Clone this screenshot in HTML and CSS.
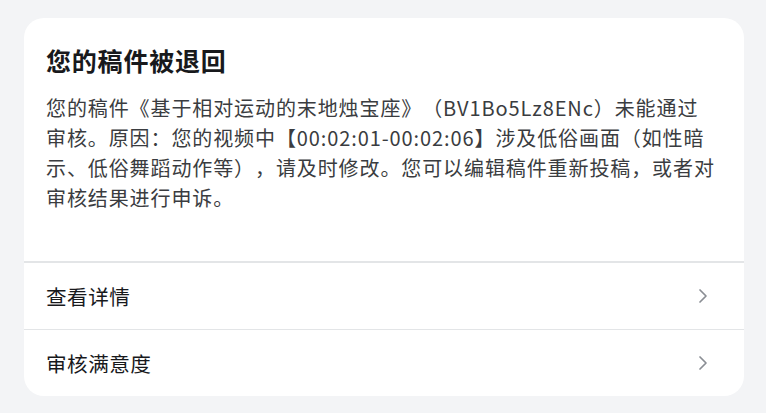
FILE: index.html
```html
<!DOCTYPE html>
<html lang="zh-CN">
<head>
<meta charset="utf-8">
<link rel="stylesheet" href="styles.css">
</head>
<body>
<div class="card">
  <div class="content">
    <h1 class="title">您的稿件被退回</h1>
    <p class="desc">您的稿件《基于相对运动的末地烛宝座》（BV1Bo5Lz8ENc）未能通过<br>审核。原因：您的视频中【00:02:01-00:02:06】涉及低俗画面（如性暗<br>示、低俗舞蹈动作等），请及时修改。您可以编辑稿件重新投稿，或者对<br>审核结果进行申诉。</p>
  </div>
  <div class="row row-first">
    <span class="row-label">查看详情</span>
    <svg class="chev" width="10" height="16" viewBox="0 0 10 16"><path d="M2 2 L8 8 L2 14" fill="none" stroke="#8a8e94" stroke-width="1.7" stroke-linecap="round" stroke-linejoin="round"/></svg>
  </div>
  <div class="row">
    <span class="row-label">审核满意度</span>
    <svg class="chev" width="10" height="16" viewBox="0 0 10 16"><path d="M2 2 L8 8 L2 14" fill="none" stroke="#8a8e94" stroke-width="1.7" stroke-linecap="round" stroke-linejoin="round"/></svg>
  </div>
</div>
</body>
</html>
```
FILE: styles.css
```css
html, body {
  margin: 0;
  padding: 0;
  background: #f3f4f6;
}
body {
  padding: 18px 22px 17px 24px;
  font-family: "Noto Sans CJK SC", "Noto Sans", sans-serif;
  text-spacing-trim: space-all;
}
.card {
  background: #ffffff;
  border-radius: 20px;
  overflow: hidden;
}
.content {
  padding: 27px 22px 48px 22px;
  border-bottom: 2px solid #e3e5e7;
}
.title {
  margin: 0;
  font-size: 25px;
  line-height: 30px;
  font-weight: 700;
  color: #18191c;
  letter-spacing: 0.8px;
}
.desc {
  margin: 18px 0 0 0;
  font-size: 20px;
  line-height: 30px;
  color: #3a3c40;
  white-space: nowrap;
  letter-spacing: 0.9px;
  text-spacing-trim: space-all;
}
.row {
  height: 66px;
  display: flex;
  align-items: center;
  justify-content: space-between;
  padding: 0 36px 0 22px;
}
.row-first {
  border-bottom: 1px solid #e3e5e7;
}
.row-label {
  font-size: 20.6px;
  color: #18191c;
  letter-spacing: 0.5px;
}
.chev {
  display: block;
}
```
